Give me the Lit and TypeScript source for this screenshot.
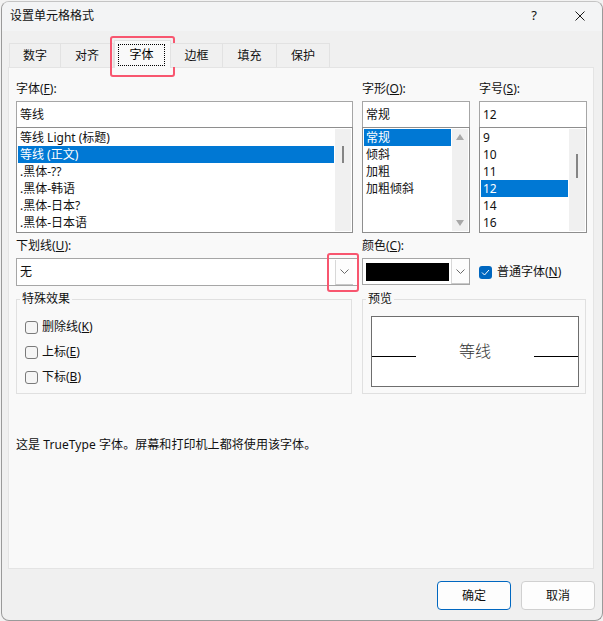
import { LitElement, html, css, svg } from "lit";
import { customElement } from "lit/decorators.js";

const TABS = [
  { label: "数字", width: 52 },
  { label: "对齐", width: 53 },
  { label: "字体", width: 57, active: true },
  { label: "边框", width: 52 },
  { label: "填充", width: 54 },
  { label: "保护", width: 53 },
];

const FONTS = ["等线 Light (标题)", "等线 (正文)", ".黑体-??", ".黑体-韩语", ".黑体-日本?", ".黑体-日本语"];
const STYLES = ["常规", "倾斜", "加粗", "加粗倾斜"];
const SIZES = ["9", "10", "11", "12", "14", "16"];

const chevron = svg`<svg width="9" height="5" viewBox="0 0 9 5"><path d="M.5.5l4 4 4-4" fill="none" stroke="#6a6a6a" stroke-width="1"/></svg>`;

@customElement("app-root")
export class AppRoot extends LitElement {
  static styles = css`
    :host {
      display: block;
      width: 603px;
      height: 621px;
      box-sizing: border-box;
      padding: 1px 0 0 1px;
      background: #f2f2f2;
      font: 12px/16px "Noto Sans", "Noto Sans CJK SC", sans-serif;
      color: #111;
    }
    .window {
      width: 602px;
      height: 620px;
      box-sizing: border-box;
      border: 1px solid #9a9a9a;
      border-top-color: #c4c4c4;
      border-radius: 8px;
      background: #f0f0f0;
      overflow: hidden;
      display: flex;
      flex-direction: column;
    }
    .title {
      box-sizing: border-box;
      height: 29px;
      flex: none;
      display: flex;
      align-items: center;
      padding: 0 17px 2px 8px;
      background: #f3f4f5;
    }
    .title .name {
      flex: 1;
    }
    .title .help {
      font-size: 13px;
      margin-right: 38px;
      margin-top: -1px;
    }
    .tabs {
      height: 36px;
      flex: none;
      display: flex;
      align-items: flex-end;
      padding-left: 7px;
      position: relative;
      z-index: 1;
    }
    .tab {
      position: relative;
      box-sizing: border-box;
      height: 24px;
      display: flex;
      align-items: center;
      justify-content: center;
      border: 1px solid #e2e2e2;
      border-bottom: 0;
      border-left-width: 0;
      background: #f0f0f0;
    }
    .tab:first-child {
      border-left-width: 1px;
    }
    .tab.active {
      height: 28px;
      margin-bottom: -1px;
      background: #f9f9f9;
      border-left-width: 1px;
      border-top-color: #e2e2e2;
      color: #000;
    }
    .focus {
      box-sizing: border-box;
      width: 47px;
      height: 22px;
      margin-right: 2px;
      border: 1px dotted #000;
      display: flex;
      align-items: center;
      justify-content: center;
    }
    .mark {
      position: absolute;
      box-sizing: border-box;
      border: 2px solid #f8566f;
      border-radius: 3px;
      pointer-events: none;
    }
    .tab .mark {
      left: -5px;
      top: -5px;
      width: 65px;
      height: 41px;
    }
    .panel {
      flex: none;
      box-sizing: border-box;
      width: 586px;
      height: 502px;
      margin-left: 6px;
      border: 1px solid #e4e4e4;
      background: #f9f9f9;
      padding: 13px 0 0 7px;
    }
    .pickers {
      display: grid;
      grid-template-columns: 337px 108px 108px;
      column-gap: 9px;
    }
    .label {
      height: 16px;
      margin-bottom: 4px;
    }
    .input {
      box-sizing: border-box;
      height: 27px;
      border: 1px solid #a6a6a6;
      background: #fff;
      padding-left: 3px;
      display: flex;
      align-items: center;
    }
    .list {
      box-sizing: border-box;
      height: 106px;
      border: 1px solid #8e8e8e;
      background: #fff;
      padding: 1px;
      margin-top: -1px;
      display: flex;
      gap: 1px;
    }
    .rows {
      flex: 1;
      min-width: 0;
    }
    .row {
      height: 17px;
      line-height: 17px;
      padding-left: 2px;
      white-space: nowrap;
    }
    .row.sel {
      background: #0078d4;
      color: #fff;
    }
    .bar {
      flex: none;
      width: 16px;
      background: #f0f0f0;
      display: flex;
      flex-direction: column;
      align-items: center;
    }
    .thumb {
      width: 2px;
      background: #858585;
    }
    .arrow {
      width: 0;
      height: 0;
      border-left: 4.5px solid transparent;
      border-right: 4.5px solid transparent;
    }
    .arrow.up {
      margin-top: 5px;
      border-bottom: 6px solid #a8a8a8;
    }
    .arrow.down {
      margin-top: auto;
      margin-bottom: 5px;
      border-top: 6px solid #a8a8a8;
    }
    .second {
      margin-top: 5px;
      display: grid;
      grid-template-columns: 337px 108px auto;
      column-gap: 9px;
    }
    .combo {
      box-sizing: border-box;
      height: 28px;
      border: 1px solid #a6a6a6;
      background: #fff;
      display: flex;
      align-items: center;
      padding-left: 3px;
      justify-content: space-between;
    }
    .combo.under {
      width: 342px;
    }
    .combo.color {
      height: 27px;
      margin-top: 1px;
      padding-left: 3px;
    }
    .swatch {
      width: 83px;
      height: 18px;
      background: #000;
    }
    .drop {
      position: relative;
      flex: none;
      box-sizing: border-box;
      width: 18px;
      height: 25px;
      border-left: 1px solid #d8d8d8;
      border-bottom: 1px solid #c8c8c8;
      background: #fdfdfd;
      display: flex;
      align-items: center;
      justify-content: center;
    }
    .under .drop {
      margin-right: 4px;
    }
    .drop .mark {
      left: -9px;
      top: -7px;
      width: 32px;
      height: 39px;
    }
    .check {
      display: flex;
      align-items: center;
      gap: 4px;
    }
    .second .check {
      margin-top: 20px;
      height: 28px;
      gap: 5px;
    }
    .box {
      flex: none;
      box-sizing: border-box;
      width: 13px;
      height: 13px;
      border: 1px solid #7a7a7a;
      border-radius: 3px;
      background: #f5f5f5;
    }
    .box.on {
      border: 0;
      background: #0067c0;
      display: flex;
      align-items: center;
      justify-content: center;
    }
    .groups {
      margin-top: 5px;
      display: grid;
      grid-template-columns: 336px 224px;
      column-gap: 10px;
    }
    fieldset {
      margin: 0;
      min-width: 0;
      box-sizing: border-box;
      height: 103px;
      border: 1px solid #e0e0e0;
      padding: 0;
    }
    legend {
      margin-left: 3px;
      padding: 0 2px;
      height: 16px;
    }
    .effects {
      display: flex;
      flex-direction: column;
      gap: 9px;
      padding: 12px 0 0 8px;
    }
    .effects .check {
      height: 16px;
    }
    .preview {
      box-sizing: border-box;
      width: 208px;
      height: 71px;
      margin: 9px 0 0 8px;
      border: 1px solid #6e6e6e;
      background: #fff;
      display: flex;
      align-items: center;
      justify-content: center;
      font-size: 16px;
      font-weight: 300;
      color: #333;
      gap: 43px;
    }
    .rule {
      flex: 1;
      height: 1px;
      background: #000;
      margin-top: 9px;
    }
    .preview span {
      margin-top: -2px;
    }
    .note {
      margin-top: 43px;
      letter-spacing: 0.07px;
    }
    .footer {
      flex: 1;
      display: flex;
      justify-content: flex-end;
      gap: 10px;
      padding: 12px 7px 0 0;
    }
    .btn {
      box-sizing: border-box;
      width: 74px;
      height: 29px;
      border: 1px solid #d0d0d0;
      border-radius: 4px;
      background: #fdfdfd;
      display: flex;
      align-items: center;
      justify-content: center;
    }
    .btn.primary {
      border-color: #0067c0;
    }
    u {
      text-underline-offset: 1px;
    }
  `;

  private _list(rows: string[], sel: number, bar: unknown) {
    return html`<div class="list">
      <div class="rows">
        ${rows.map((r, i) => html`<div class="row ${i === sel ? "sel" : ""}">${r}</div>`)}
      </div>
      ${bar}
    </div>`;
  }

  private _thumb(top: number, height: number) {
    return html`<div class="bar"><div class="thumb" style="margin-top:${top}px;height:${height}px"></div></div>`;
  }

  render() {
    return html`<div class="window">
      <div class="title">
        <span class="name">设置单元格格式</span>
        <span class="help">?</span>
        <svg width="10" height="10" viewBox="0 0 10 10">
          <path d="M.5.5l9 9M9.5.5l-9 9" stroke="#1a1a1a" stroke-width="1" fill="none" />
        </svg>
      </div>

      <div class="tabs">
        ${TABS.map(
          (t) => html`<div class="tab ${t.active ? "active" : ""}" style="width:${t.width}px">
            ${t.active
              ? html`<div class="focus">${t.label}</div><div class="mark"></div>`
              : t.label}
          </div>`
        )}
      </div>

      <div class="panel">
        <div class="pickers">
          <div>
            <div class="label">字体(<u>F</u>):</div>
            <div class="input">等线</div>
            ${this._list(FONTS, 1, this._thumb(17, 17))}
          </div>
          <div>
            <div class="label">字形(<u>O</u>):</div>
            <div class="input">常规</div>
            ${this._list(
              STYLES,
              0,
              html`<div class="bar"><div class="arrow up"></div><div class="arrow down"></div></div>`
            )}
          </div>
          <div>
            <div class="label">字号(<u>S</u>):</div>
            <div class="input">12</div>
            ${this._list(SIZES, 3, this._thumb(25, 24))}
          </div>
        </div>

        <div class="second">
          <div>
            <div class="label">下划线(<u>U</u>):</div>
            <div class="combo under">
              <span>无</span>
              <div class="drop">${chevron}<div class="mark"></div></div>
            </div>
          </div>
          <div>
            <div class="label">颜色(<u>C</u>):</div>
            <div class="combo color">
              <div class="swatch"></div>
              <div class="drop">${chevron}</div>
            </div>
          </div>
          <div class="check">
            <div class="box on">
              <svg width="9" height="7" viewBox="0 0 9 7">
                <path d="M1 3.5 3.5 6 8 1" fill="none" stroke="#fff" stroke-width="1" />
              </svg>
            </div>
            <span>普通字体(<u>N</u>)</span>
          </div>
        </div>

        <div class="groups">
          <fieldset>
            <legend>特殊效果</legend>
            <div class="effects">
              <div class="check"><div class="box"></div><span>删除线(<u>K</u>)</span></div>
              <div class="check"><div class="box"></div><span>上标(<u>E</u>)</span></div>
              <div class="check"><div class="box"></div><span>下标(<u>B</u>)</span></div>
            </div>
          </fieldset>
          <fieldset>
            <legend>预览</legend>
            <div class="preview">
              <div class="rule"></div>
              <span>等线</span>
              <div class="rule"></div>
            </div>
          </fieldset>
        </div>

        <div class="note">这是 TrueType 字体。屏幕和打印机上都将使用该字体。</div>
      </div>

      <div class="footer">
        <div class="btn primary">确定</div>
        <div class="btn">取消</div>
      </div>
    </div>`;
  }
}
